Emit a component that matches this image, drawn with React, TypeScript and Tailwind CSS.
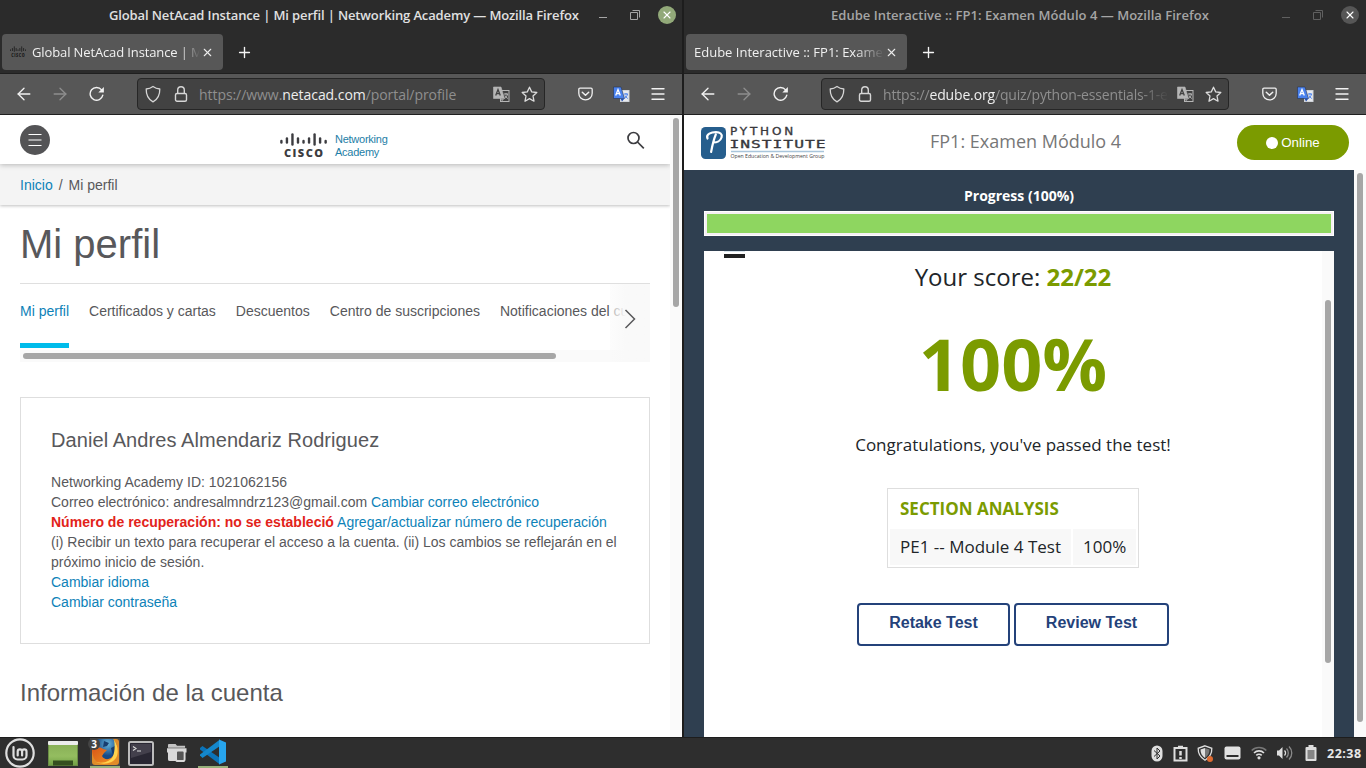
import React from "react";
import { ArrowLeft, ArrowRight, X, Plus, Menu } from "lucide-react";

function Shield() {
  return (
    <svg width="16" height="18" viewBox="0 0 16 18" fill="none" stroke="#d6d6d6" strokeWidth="1.3" strokeLinejoin="round">
      <path d="M8 1.5C10 3 12.300 3.800 14.800 4C14.900 9.500 13.500 14 8 16.800C2.500 14 1.100 9.500 1.200 4C3.700 3.800 6 3 8 1.500Z" />
    </svg>
  );
}

function LockIcon() {
  return (
    <svg width="14" height="18" viewBox="0 0 14 18" fill="none" stroke="#d6d6d6" strokeWidth="1.4">
      <rect x="1.500" y="8.500" width="11" height="7.800" rx="1.500" />
      <path d="M3.700 8.500V5a3.300 3.300 0 0 1 6.600 0v3.500" />
    </svg>
  );
}

function Reload() {
  return (
    <svg width="16" height="16" viewBox="0 0 16 16" fill="none">
      <path d="M13.800 9.200A6.400 6.400 0 1 1 12.600 3.900" stroke="#f2f2f2" strokeWidth="1.400" strokeLinecap="round" />
      <path d="M14.900 1v5.600H9.300z" fill="#f2f2f2" />
    </svg>
  );
}

function Translate({ color }: { color: boolean }) {
  const back = color ? "#4a82ee" : "#b6b6b6";
  return (
    <svg width="17" height="17" viewBox="0 0 17 17">
      <rect x="7.500" y="4.500" width="8.500" height="11" fill={color ? "#e8eaee" : "#424242"} stroke={color ? "#d0d4da" : "#b6b6b6"} />
      <path d="M.5 1h7.500l3.500 11.500H.5z" fill={back} stroke={color ? "#26334d" : "#b6b6b6"} strokeWidth=".6" />
      <path d="M7.500 12.500h4L9 15.500z" fill={color ? "#2450b0" : "#9a9a9a"} />
      <path d="M2.700 9.500L5 3.500l2.300 6M3.500 7.700h3" fill="none" stroke={color ? "#fff" : "#424242"} strokeWidth="1.300" />
      <path d="M11 8h4M13 7v1.500M14.500 8c-.3 2-1.500 3.500-3 4.500M12 9.500c.6 1.300 1.600 2.400 2.800 3" fill="none" stroke={color ? "#4a82ee" : "#b6b6b6"} />
    </svg>
  );
}

function StarIcon() {
  return (
    <svg width="17" height="17" viewBox="0 0 17 17" fill="none" stroke="#dcdcdc" strokeWidth="1.300" strokeLinejoin="round">
      <path d="M8.500 1.200l2.200 4.700 5.100.6-3.800 3.500 1 5.200-4.500-2.600L4 15.200 5 10 1.200 6.500l5.100-.6z" />
    </svg>
  );
}

function Pocket() {
  return (
    <svg width="15" height="14" viewBox="0 0 15 14" fill="none" stroke="#efefef" strokeWidth="1.300" strokeLinecap="round" strokeLinejoin="round">
      <path d="M2 1.200h11a1.200 1.200 0 0 1 1.200 1.200v3.800a6.700 6.700 0 0 1-13.400 0V2.400A1.200 1.200 0 0 1 2 1.200z" />
      <path d="M4.300 5.200l3.200 3 3.200-3" strokeWidth="1.500" />
    </svg>
  );
}

function CiscoBars({ className, fill }: { className: string; fill: string }) {
  const bars = [[0, 6.5, 4], [1, 4, 6.5], [2, 0, 12.5], [3, 4, 6.5], [4, 6.5, 4], [5, 4, 6.5], [6, 0, 12.5], [7, 4, 6.5], [8, 6.5, 4]];
  return (
    <svg className={className} viewBox="0 0 47 26" preserveAspectRatio="none">
      {bars.map(([i, y, h]) => (
        <rect key={i} x={0.2 + i * 5.53} y={y + 0.3} width="2.400" height={h} rx="1.200" fill={fill} />
      ))}
      <text x="4" y="24.300" textLength="39" lengthAdjust="spacing" fontFamily="Open Sans" fontWeight="800" fontSize="11" fill={fill}>CISCO</text>
    </svg>
  );
}

type BrowserProps = {
  active: boolean;
  titleClass: string;
  title: string;
  tab: React.ReactNode;
  url: React.ReactNode;
  children: React.ReactNode;
};

function Browser({ active, titleClass, title, tab, url, children }: BrowserProps) {
  const ctl = active ? "#a5a5a5" : "#606060";
  return (
    <section className="flex h-[737px] w-[682px] shrink-0 flex-col overflow-hidden bg-[#2b2b2b] font-['Open_Sans',sans-serif]">
      <div className="flex h-[30px] shrink-0 items-center">
        <div className={`${titleClass} shrink-0 pt-[2px] font-semibold whitespace-nowrap`}>{title}</div>
        <div className={`ml-auto flex items-center ${active ? "pr-[6px]" : "pr-[7px]"}`}>
          <svg width="44" height="18" viewBox="0 0 44 18" fill="none" stroke={ctl}>
            <path d="M2 11.500h8M33.500 6.500h7v7h-7zM35.500 4.500h7v7" />
          </svg>
          <div className={`ml-[17px] flex size-[18px] items-center justify-center rounded-full ${active ? "bg-[#92a979]" : "bg-[#565656]"}`}>
            <X size={12} color="#fff" strokeWidth={2.2} />
          </div>
        </div>
      </div>
      <div className="flex h-[43px] shrink-0 pt-[4px] pl-[2px]">
        <div className="flex h-[36px] w-[221px] items-center rounded-[4px] bg-[#575757] px-[8px] text-[13px] text-[#f0f0f0]">
          {tab}
          <X className="ml-auto shrink-0" size={13} color="#ececec" strokeWidth={2} />
          <span className="w-[1px] shrink-0" />
        </div>
        <Plus className="mt-[10px] ml-[13px]" size={17} color="#f5f5f5" strokeWidth={1.9} />
      </div>
      <div className="flex h-[42px] shrink-0 items-center border-y border-[#1f1f1f] bg-[#575757]">
        <ArrowLeft className="ml-[14px]" size={20} color="#f2f2f2" strokeWidth={1.6} />
        <ArrowRight className="ml-[16px]" size={20} color="#8e8e8e" strokeWidth={1.6} />
        <span className="ml-[18.500px]"><Reload /></span>
        <div className="ml-[32.500px] flex h-[32px] w-[408px] shrink-0 items-center rounded-[4px] border border-[#262626] bg-[#424242] pl-[7px]">
          <Shield />
          <span className="ml-[13px]"><LockIcon /></span>
          <div className="ml-[11px] w-[286px] overflow-hidden whitespace-nowrap text-[#8f8f8f]">{url}</div>
          <span className="ml-[8px]"><Translate color={false} /></span>
          <span className="ml-[11px]"><StarIcon /></span>
        </div>
        <span className="ml-[33px]"><Pocket /></span>
        <span className="ml-[20px]"><Translate color /></span>
        <Menu className="ml-[19px]" size={18} color="#f2f2f2" strokeWidth={1.8} />
      </div>
      <div className="flex min-h-0 flex-1 bg-white">{children}</div>
    </section>
  );
}

function Netacad() {
  return (
    <>
      <div className="flex w-[670px] shrink-0 flex-col overflow-hidden font-['Liberation_Sans',Arial,sans-serif] text-[14px] text-[#58585b]">
        <header className="z-10 flex h-[49px] shrink-0 items-center bg-white pl-[20px] shadow-[0_1px_5px_rgba(0,0,0,0.25)]">
          <div className="flex size-[30px] items-center justify-center rounded-full bg-[#545456]">
            <svg width="14" height="14" viewBox="0 0 14 14" stroke="#fff" strokeWidth="1.200"><path d="M.5 1.500h13M.5 7h13M.5 12.500h13" /></svg>
          </div>
          <CiscoBars className="mt-[12px] ml-[230px] h-[26px] w-[47px]" fill="#3c3c40" />
          <div className="mt-[12px] ml-[8px] text-[11px] leading-[12.500px] tracking-[-0.25px] text-[#1d7ea6]">Networking<br />Academy</div>
          <svg className="mt-[2px] mr-[25px] ml-auto" width="19" height="19" viewBox="0 0 19 19" fill="none" stroke="#3c3c40" strokeWidth="1.700"><circle cx="7.500" cy="7" r="5.500" /><path d="M11.500 11l6.300 6.300" /></svg>
        </header>
        <nav className="flex h-[41px] shrink-0 items-center gap-[6px] bg-[#f4f4f4] pt-[2px] pl-[20px] shadow-[0_1px_3px_rgba(0,0,0,0.25)]">
          <span className="text-[#0d82b8]">Inicio</span><span>/</span><span>Mi perfil</span>
        </nav>
        <div className="px-[20px]">
          <h1 className="h-[79px] border-b border-[#dfdfdf] pt-[15px] text-[40px] leading-[48px]">Mi perfil</h1>
          <div className="relative h-[78px] overflow-hidden">
            <div className="flex h-[64px] gap-[20px] whitespace-nowrap">
              <span className="border-b-[5px] border-[#00bceb] pt-[17px] text-[#0d82b8]">Mi perfil</span>
              <span className="pt-[17px]">Certificados y cartas</span>
              <span className="pt-[17px]">Descuentos</span>
              <span className="pt-[17px]">Centro de suscripciones</span>
              <span className="pt-[17px]">Notificaciones del curso</span>
            </div>
            <div className="mt-[2px] h-[12px] bg-[#fafafa] px-[3px] pt-[3px]">
              <div className="h-[6px] w-[533px] rounded-full bg-[#a6a6a6]" />
            </div>
            <div className="absolute top-0 right-0 flex h-[78px] w-[40px] items-center justify-center bg-linear-to-r from-[#fafafa]/50 to-[#f9f9f9] to-40%">
              <svg className="mb-[8px]" width="14" height="20" viewBox="0 0 14 20" fill="none" stroke="#58585b" strokeWidth="1.500"><path d="M2.500 1l9 9-9 9" /></svg>
            </div>
          </div>
          <div className="mt-[35px] h-[247px] border border-[#dedede] px-[30px] pt-[28px] leading-[20px]">
            <h2 className="mb-[18px] text-[20px] leading-[28px] tracking-[0.075px]">Daniel Andres Almendariz Rodriguez</h2>
            <p className="tracking-[0.030px]">Networking Academy ID: 1021062156</p>
            <p>Correo electrónico: andresalmndrz123@gmail.com <span className="text-[#0d82b8]">Cambiar correo electrónico</span></p>
            <p className="tracking-[0.012px]"><b className="text-[#e2231a]">Número de recuperación: no se estableció</b> <span className="text-[#0d82b8]">Agregar/actualizar número de recuperación</span></p>
            <p>(i) Recibir un texto para recuperar el acceso a la cuenta. (ii) Los cambios se reflejarán en el<br />próximo inicio de sesión.</p>
            <p className="text-[#0d82b8]">Cambiar idioma</p>
            <p className="text-[#0d82b8]">Cambiar contraseña</p>
          </div>
          <h2 className="mt-[34px] text-[24px] leading-[30px]">Información de la cuenta</h2>
        </div>
      </div>
      <div className="flex w-[12px] justify-center bg-[#fafafa] pt-[3px]">
        <div className="h-[189px] w-[6px] rounded-full bg-[#a6a6a6]" />
      </div>
    </>
  );
}

function Edube() {
  return (
    <div className="flex w-[682px] flex-col">
      <header className="flex h-[55px] shrink-0 items-center bg-white">
        <svg className="ml-[16px]" width="126" height="36" viewBox="0 0 126 36">
          <rect x="1" y="2" width="25" height="32" rx="4.500" fill="#265e8d" />
          <path d="M7.500 13.500C5.500 9 11.500 7.200 16 7.200c4 0 6.500 1.800 5.600 5-1 3.600-5 5.300-8 5.300M15.800 9.500c-2.200 5-3.300 10-4.700 17.500" fill="none" stroke="#fff" strokeWidth="2.200" strokeLinecap="round" />
          <g fill="#38383c" stroke="#38383c" strokeWidth=".3">
            <text transform="translate(30 9.800) scale(1.250 1)" textLength="50.500" lengthAdjust="spacing" fontFamily="DejaVu Sans" fontSize="9.600">PYTHON</text>
            <text transform="translate(29.500 23) scale(1.600 1)" textLength="60" lengthAdjust="spacing" fontFamily="DejaVu Sans Mono" fontSize="10.200">INSTITUTE</text>
          </g>
          <path d="M31 26.500h93" stroke="#a9c5db" strokeWidth="1.500" />
          <text x="30.500" y="33.200" textLength="94" lengthAdjust="spacingAndGlyphs" fontFamily="Open Sans" fontSize="6" fill="#444">Open Education &amp; Development Group</text>
        </svg>
        <div className="mb-[2px] ml-[104px] text-[18px] text-[#777]">FP1: Examen Módulo 4</div>
        <div className="mr-[17px] ml-auto flex h-[35px] w-[112px] items-center justify-center gap-[3px] rounded-full bg-[#7b9b00] font-['Liberation_Sans'] text-[13.300px] text-white">
          <span className="size-[12px] rounded-full bg-white" />Online
        </div>
      </header>
      <div className="flex min-h-0 flex-1">
        <div className="flex w-[670px] flex-col bg-[#2f3f50] px-[20px]">
          <div className="h-[41px] pt-[16px] text-center text-[14px] leading-[20px] font-bold text-white">Progress (100%)</div>
          <div className="h-[25px] shrink-0 border border-white bg-[#f6f0f4] p-[2px]"><div className="h-full bg-[#8ed660]" /></div>
          <main className="mt-[15px] flex min-h-0 flex-1 bg-white text-[#212529]">
            <div className="flex w-[618px] flex-col items-center">
              <div className="ml-[20px] h-[7px] w-[21px] self-start border-b-4 border-[#212121]"><div className="h-px bg-[#d9e6ef]" /></div>
              <div className="mt-px text-[24px] leading-[36px]">Your score: <b className="text-[#7b9b00]">22/22</b></div>
              <div className="mt-[14px] text-[72px] leading-[108px] font-bold text-[#7b9b00]">100%</div>
              <div className="mt-[15px] text-[17px] leading-[26px]">Congratulations, you've passed the test!</div>
              <div className="mt-[30px] h-[80px] w-[252px] border border-[#dedede] p-[2px] text-[17px]">
                <div className="h-[38px] pl-[10px] leading-[36px] font-bold text-[#7b9b00]">SECTION ANALYSIS</div>
                <div className="flex h-[36px] gap-[2px] leading-[35px]">
                  <div className="w-[181px] bg-[#f8f8f8] pl-[10px]">PE1 -- Module 4 Test</div>
                  <div className="flex-1 bg-[#f8f8f8] pl-[10px]">100%</div>
                </div>
              </div>
              <div className="mt-[35px] flex gap-[4px] font-['Liberation_Sans'] text-[16px] font-bold text-[#24427a]">
                <div className="flex h-[43px] w-[153px] items-center justify-center rounded-[4px] border-2 border-[#24427a] pb-[4px]">Retake Test</div>
                <div className="flex h-[43px] w-[155px] items-center justify-center rounded-[4px] border-2 border-[#24427a] pb-[4px]">Review Test</div>
              </div>
            </div>
            <div className="flex w-[12px] justify-center bg-[#fafafa] pt-[49px]"><div className="h-[363px] w-[6px] rounded-full bg-[#a6a6a6]" /></div>
          </main>
        </div>
        <div className="flex w-[12px] justify-center bg-[#fafafa] pt-[3px]"><div className="h-[549px] w-[6px] rounded-full bg-[#a6a6a6]" /></div>
      </div>
    </div>
  );
}

function Taskbar() {
  return (
    <footer className="flex h-[31px] w-full items-center border-t border-[#1d1d1d] bg-[#2e2e2e]">
      <svg className="ml-[5px]" width="30" height="30" viewBox="0 0 30 30" fill="none" stroke="#dedede">
        <circle cx="15" cy="15" r="13.700" strokeWidth="2.200" />
        <path d="M8.500 9v8.500a4 4 0 0 0 4 4h5a4 4 0 0 0 4-4v-4a2.200 2.200 0 0 0-4.400 0v4m0-4a2.200 2.200 0 0 0-4.400 0v4" strokeWidth="2.200" strokeLinecap="round" />
      </svg>
      <svg className="ml-[13px]" width="30" height="26" viewBox="0 0 30 26">
        <defs><linearGradient id="desk" x2="0" y2="1"><stop stopColor="#86ad55" /><stop offset=".6" stopColor="#94bd60" /><stop offset="1" stopColor="#71a044" /></linearGradient></defs>
        <rect x=".5" y="2" width="29" height="23.500" fill="url(#desk)" stroke="#6a8d45" />
        <rect y="1" width="30" height="4" rx="1" fill="#ececec" />
        <path d="M5 25.500v-5h20v5z" fill="#35501f" />
      </svg>
      <div className="relative ml-[12px] flex h-[30px] w-[30px] flex-col items-center border-b-2 border-[#97b07a] bg-[#454545]">
        <svg className="mt-[1px]" width="27" height="26" viewBox="0 0 27 26">
          <defs>
            <radialGradient id="globe" cx=".6" cy=".2"><stop stopColor="#67b5dc" /><stop offset="1" stopColor="#174a87" /></radialGradient>
            <linearGradient id="fox" x2="1" y2="1"><stop stopColor="#d64e16" /><stop offset="1" stopColor="#f49a25" /></linearGradient>
          </defs>
          <rect width="27" height="26" rx="3" fill="#e08c29" />
          <path d="M3 0h18l4 6v10l-8 8L2 14z" fill="url(#globe)" />
          <path d="M12 2l5 2-2 3-4 1zM19 9l4-2 1 6-3 4z" fill="#173e70" />
          <path d="M0 7l4 3c2-2 5-2 7 0l4 1-3 3-2 3c2 4 7 4 10 1 4-3 5-8 4-14 3 5 3 11 0 16-4 6-15 7-20 2C0 18 0 12 0 7z" fill="url(#fox)" />
          <path d="M22 1c4 5 5 13 2 18-4 6-13 7-20 4 8 2 15-1 17-6 2-5 2-11 1-16z" fill="#ffd34d" />
        </svg>
        <span className="absolute top-0 left-[-2px] flex size-[12px] items-center justify-center rounded-full bg-[#444] font-['Open_Sans'] text-[10px] leading-none font-bold text-white">3</span>
      </div>
      <svg className="ml-[8px]" width="26" height="25" viewBox="0 0 26 25">
        <rect x="1" y="1" width="24" height="23" rx="1.500" fill="#292733" stroke="#bcbcbc" strokeWidth="2" />
        <path d="M3 3h20v8L3 17z" fill="#43404c" />
        <path d="M5 5.500l3 2-3 2M9 10h4" fill="none" stroke="#ddd" strokeWidth="1.100" />
      </svg>
      <svg className="mb-[2px] ml-[13px]" width="20" height="19" viewBox="0 0 21 20">
        <path d="M1 2a1 1 0 0 1 1-1h7l1.500 2H19v2H1z" fill="#c4c4c4" />
        <path d="M0 5.500h20.500v4.500H0zM1 9h9v10H3a2 2 0 0 1-2-2z" fill="#d9d9d9" />
        <rect x="9.500" y="8" width="9" height="11" rx="2" fill="#555" stroke="#d9d9d9" strokeWidth="2" />
      </svg>
      <div className="ml-[11px] flex h-[30px] w-[30px] flex-col items-center border-b-2 border-[#97b07a]">
        <svg className="mt-[1px]" width="26" height="26" viewBox="0 0 26 26">
          <path d="M0 9l2.500-2L20 19v6.500L0 10.500z" fill="#0b73b9" />
          <path d="M0 16.500l2.500 2.500L20 7V.5L0 15.500z" fill="#1487cc" />
          <path d="M19 .5L26 3.500v19l-7 3z" fill="#27a5ee" />
        </svg>
      </div>
      <div className="mr-[4px] ml-auto flex items-center">
        <svg width="12" height="17" viewBox="0 0 12 17"><rect x=".5" y=".5" width="11" height="16" rx="5.500" fill="#dedede" /><path d="M3 5.500l6 5.500-3 3V3l3 3-6 5.500" fill="none" stroke="#2e2e2e" /></svg>
        <svg className="ml-[10px]" width="15" height="17" viewBox="0 0 15 17" fill="none" stroke="#dedede" strokeWidth="2"><rect x="1.500" y="3" width="12" height="12.500" /><path d="M5 2h5M7.500 6v4.500M7.500 12v2" strokeWidth="2.500" /></svg>
        <svg className="ml-[9px]" width="17" height="17" viewBox="0 0 17 17"><path d="M8 .8l6.800 2.500c.2 5-1.800 9-6.800 12-5-3-7-7-6.800-12z" fill="none" stroke="#dedede" strokeWidth="1.300" /><path d="M8 3L3.500 4.500c0 3.500 1.200 6.300 4.500 8.500z" fill="#dedede" /><path d="M8 3v10c3-2 4.500-5 4.500-8.500z" fill="#777" /><circle cx="13" cy="14" r="3" fill="#df6b31" /></svg>
        <svg className="ml-[10px]" width="17" height="14" viewBox="0 0 17 14"><rect x=".5" y=".5" width="16" height="13" rx="2" fill="#e2e2e2" /><path d="M2.500 10h12" stroke="#2e2e2e" strokeWidth="2" /></svg>
        <svg className="ml-[10px]" width="16" height="14" viewBox="0 0 16 14" fill="none" strokeWidth="1.600"><path d="M.7 4.500a10.300 10.300 0 0 1 14.600 0" stroke="#777" /><path d="M3 7a7 7 0 0 1 10 0M5.300 9.400a3.800 3.800 0 0 1 5.400 0" stroke="#dedede" /><circle cx="8" cy="11.800" r="1.600" fill="#dedede" /></svg>
        <svg className="ml-[9px]" width="18" height="16" viewBox="0 0 18 16" fill="none"><path d="M1 5.500h2L6.500 2v12L3 10.500H1z" fill="#dedede" /><path d="M8.500 5.500a3.500 3.500 0 0 1 0 5" stroke="#dedede" strokeWidth="1.300" /><path d="M10.500 3.500a6.500 6.500 0 0 1 0 9M13 1.500a9 9 0 0 1 0 13" stroke="#8a8a8a" strokeWidth="1.300" /></svg>
        <svg className="ml-[11px]" width="12" height="16" viewBox="0 0 12 16"><path d="M3.500 0h5v2h2q1 0 1 1v12q0 1-1 1h-9q-1 0-1-1V3q0-1 1-1h2z" fill="#dedede" /><path d="M2.500 5h7v9h-7z" fill="#858585" /></svg>
        <span className="ml-[10px] w-[35px] pt-[2px] font-['Open_Sans'] text-[12.500px] leading-none font-bold tracking-[0.500px] whitespace-nowrap text-[#e8e8e8]">22:38</span>
      </div>
    </footer>
  );
}

export default function App() {
  return (
    <div className="flex h-[768px] w-[1366px] flex-col overflow-hidden bg-[#1d1d1d]">
      <div className="flex gap-[2px]">
        <Browser
          active
          titleClass="ml-[109px] text-[13px] text-[#e0e0e0] tracking-[-0.130px]"
          title="Global NetAcad Instance | Mi perfil | Networking Academy — Mozilla Firefox"
          tab={
            <>
              <CiscoBars className="h-[12px] w-[16px] shrink-0" fill="#1c1c1c" />
              <div className="ml-[6px] w-[168px] overflow-hidden mask-r-from-88% pt-px tracking-[-0.120px] whitespace-nowrap">Global NetAcad Instance | Mi</div>
            </>
          }
          url={<div className="text-[14px] tracking-[-0.060px]">https://www.<span className="text-[#eee]">netacad.com</span>/portal/profile</div>}
        >
          <Netacad />
        </Browser>
        <Browser
          active={false}
          titleClass="ml-[147px] text-[13px] text-[#a5a5a5] tracking-[0.020px]"
          title="Edube Interactive :: FP1: Examen Módulo 4 — Mozilla Firefox"
          tab={<div className="w-[190px] overflow-hidden mask-r-from-85% pt-px whitespace-nowrap">Edube Interactive :: FP1: Examen</div>}
          url={<div className="mask-r-from-90% text-[14px] tracking-[-0.160px]">https://<span className="text-[#eee]">edube.org</span>/quiz/python-essentials-1-esp</div>}
        >
          <Edube />
        </Browser>
      </div>
      <Taskbar />
    </div>
  );
}
